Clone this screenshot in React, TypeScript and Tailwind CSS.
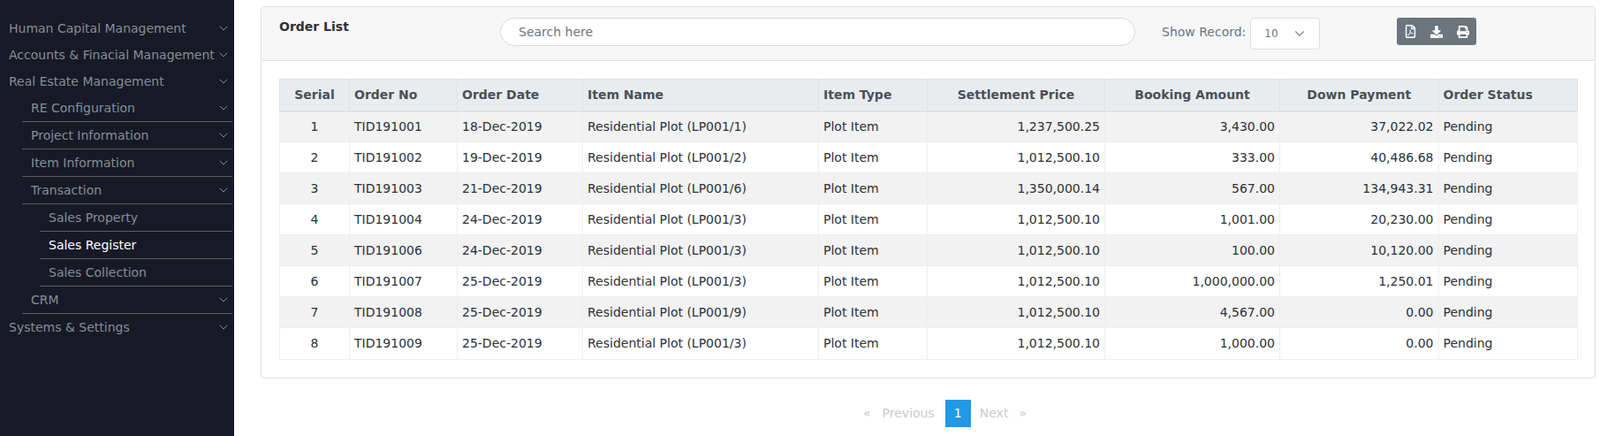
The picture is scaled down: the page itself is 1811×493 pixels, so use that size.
import React from 'react';
import { ChevronDown } from 'lucide-react';
import { FaRegFilePdf, FaDownload, FaPrint } from 'react-icons/fa';

const orders = [
  ['1', 'TID191001', '18-Dec-2019', 'Residential Plot (LP001/1)', '1,237,500.25', '3,430.00', '37,022.02'],
  ['2', 'TID191002', '19-Dec-2019', 'Residential Plot (LP001/2)', '1,012,500.10', '333.00', '40,486.68'],
  ['3', 'TID191003', '21-Dec-2019', 'Residential Plot (LP001/6)', '1,350,000.14', '567.00', '134,943.31'],
  ['4', 'TID191004', '24-Dec-2019', 'Residential Plot (LP001/3)', '1,012,500.10', '1,001.00', '20,230.00'],
  ['5', 'TID191006', '24-Dec-2019', 'Residential Plot (LP001/3)', '1,012,500.10', '100.00', '10,120.00'],
  ['6', 'TID191007', '25-Dec-2019', 'Residential Plot (LP001/3)', '1,012,500.10', '1,000,000.00', '1,250.01'],
  ['7', 'TID191008', '25-Dec-2019', 'Residential Plot (LP001/9)', '1,012,500.10', '4,567.00', '0.00'],
  ['8', 'TID191009', '25-Dec-2019', 'Residential Plot (LP001/3)', '1,012,500.10', '1,000.00', '0.00'],
];

const TopItem: React.FC<{ label: string }> = ({ label }) => (
  <div className="flex h-[30px] items-center justify-between pl-[10px] pr-[4px]">
    <span className="whitespace-nowrap">{label}</span>
    <ChevronDown className="w-[16px] h-[16px] shrink-0" strokeWidth={1.5} />
  </div>
);

const SubItem: React.FC<{ label: string }> = ({ label }) => (
  <div className="flex h-[31px] ml-[25px] mr-[2px] items-center justify-between pl-[10px] pr-[2px] border-b border-[#5c5c5c]">
    <span>{label}</span>
    <ChevronDown className="w-[16px] h-[16px] shrink-0" strokeWidth={1.5} />
  </div>
);

const LeafItem: React.FC<{ label: string; active?: boolean }> = ({ label, active }) => (
  <div className={`flex h-[31px] ml-[45px] mr-[2px] items-center pl-[10px] border-b border-[#5c5c5c] ${active ? 'text-white' : ''}`}>
    {label}
  </div>
);

const App: React.FC = () => {
  const th = 'border border-[#dee2e6] border-b-2 px-[5px] font-bold text-[#495057]';
  const td = 'border border-[#eeeeee] px-[5px] text-[#2c3136]';

  return (
    <div className="flex h-[493px] overflow-hidden bg-white text-[14px] text-[#212529] font-['DejaVu_Sans',sans-serif]">
      {/* Sidebar */}
      <aside className="w-[265px] shrink-0 bg-[#171a26] pt-[17px] text-[#868e96]">
        <TopItem label="Human Capital Management" />
        <TopItem label="Accounts & Finacial Management" />
        <TopItem label="Real Estate Management" />
        <SubItem label="RE Configuration" />
        <SubItem label="Project Information" />
        <SubItem label="Item Information" />
        <SubItem label="Transaction" />
        <LeafItem label="Sales Property" />
        <LeafItem label="Sales Register" active />
        <LeafItem label="Sales Collection" />
        <SubItem label="CRM" />
        <TopItem label="Systems & Settings" />
      </aside>

      <main className="flex-1 min-w-0 pl-[30px] pr-[5px] pt-[7px]">
        <div className="border border-[#dfdfdf] rounded-[4px] h-[421px]">
          {/* Card header */}
          <div className="flex h-[61px] items-start bg-[#f7f7f7] border-b border-[#dfdfdf] rounded-t-[4px] pl-[20px] pt-[12px]">
            <div className="w-[250px] font-bold text-[#2c3136] leading-[20px]">Order List</div>
            <input
              readOnly
              placeholder="Search here"
              className="w-[719px] h-[32px] rounded-full border border-[#d9d9d9] bg-white px-[20px] outline-none placeholder:text-[#6c757d]"
            />
            <label className="ml-[30px] mt-[4px] text-[#6c757d] leading-[24px] whitespace-nowrap">Show Record:</label>
            <div className="ml-[5px] flex w-[79px] h-[36px] items-center justify-between rounded-[4px] border border-[#dddddd] bg-white pl-[15px] pr-[13px] text-[12px] text-[#6c757d]">
              <span>10</span>
              <ChevronDown className="w-[18px] h-[18px] text-[#888888]" strokeWidth={1.5} />
            </div>
            <div className="ml-[87px] flex h-[31px] w-[90px] items-center justify-between rounded-[3px] bg-[#6c757d] pl-[9px] pr-[8px] text-white">
              <FaRegFilePdf className="w-[13px] h-[15px]" />
              <FaDownload className="w-[14px] h-[14px]" />
              <FaPrint className="w-[14px] h-[14px]" />
            </div>
          </div>

          {/* Table */}
          <div className="px-[20px] pt-[20px]">
            <table className="w-[1469px] table-fixed border-collapse">
              <colgroup>
                <col className="w-[79px]" />
                <col className="w-[122px]" />
                <col className="w-[142px]" />
                <col className="w-[267px]" />
                <col className="w-[123px]" />
                <col className="w-[201px]" />
                <col className="w-[198px]" />
                <col className="w-[179.5px]" />
                <col className="w-[157.5px]" />
              </colgroup>
              <thead>
                <tr className="h-[36px] bg-[#e9ecef]">
                  <th className={`${th} text-center`}>Serial</th>
                  <th className={`${th} text-left`}>Order No</th>
                  <th className={`${th} text-left`}>Order Date</th>
                  <th className={`${th} text-left`}>Item Name</th>
                  <th className={`${th} text-left`}>Item Type</th>
                  <th className={`${th} text-center`}>Settlement Price</th>
                  <th className={`${th} text-center`}>Booking Amount</th>
                  <th className={`${th} text-center`}>Down Payment</th>
                  <th className={`${th} text-left`}>Order Status</th>
                </tr>
              </thead>
              <tbody>
                {orders.map((o) => (
                  <tr key={o[0]} className="h-[35px] last:h-[36px] odd:bg-[#f2f2f2]">
                    <td className={`${td} text-center`}>{o[0]}</td>
                    <td className={td}>{o[1]}</td>
                    <td className={td}>{o[2]}</td>
                    <td className={td}>{o[3]}</td>
                    <td className={td}>Plot Item</td>
                    <td className={`${td} text-right`}>{o[4]}</td>
                    <td className={`${td} text-right`}>{o[5]}</td>
                    <td className={`${td} text-right`}>{o[6]}</td>
                    <td className={td}>Pending</td>
                  </tr>
                ))}
              </tbody>
            </table>
          </div>
        </div>

        {/* Pagination */}
        <div className="mt-[24px] flex h-[31px] items-center justify-center pl-[38px] text-[#cacaca]">
          <span>«</span>
          <span className="ml-[13px]">Previous</span>
          <span className="ml-[12px] flex h-[31px] w-[29px] items-center justify-center bg-[#2199e8] text-white">1</span>
          <span className="ml-[10px]">Next</span>
          <span className="ml-[12px]">»</span>
        </div>
      </main>
    </div>
  );
};

export default App;
